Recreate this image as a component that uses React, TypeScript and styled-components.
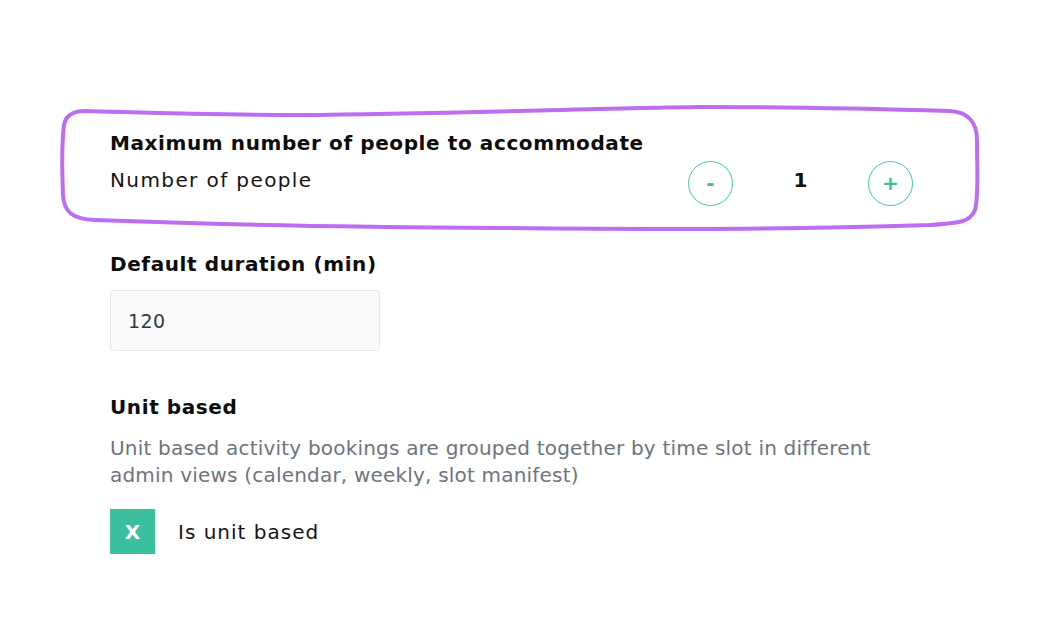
import React, { useState } from "react";
import styled, { createGlobalStyle } from "styled-components";

const GlobalStyle = createGlobalStyle`
  html, body {
    margin: 0;
    padding: 0;
    background: #ffffff;
  }
  body {
    font-family: "DejaVu Sans", "Noto Sans", sans-serif;
    color: #111111;
  }
`;

const Page = styled.div`
  position: relative;
  width: 1039px;
  height: 630px;
  box-sizing: border-box;
  padding: 131px 0 0 110px;
`;

const Section = styled.div<{ $gap: number; $top?: number }>`
  display: flex;
  flex-direction: column;
  gap: ${(p) => p.$gap}px;
  margin-top: ${(p) => p.$top ?? 0}px;
`;

const Title = styled.div`
  font-size: 20px;
  font-weight: 700;
  line-height: 24px;
  letter-spacing: 0.6px;
  color: #0c0c0c;
`;

const CounterRow = styled.div`
  display: flex;
  align-items: center;
  width: 803px;
  height: 44px;
`;

const RowLabel = styled.div`
  flex: 1;
  font-size: 20px;
  line-height: 24px;
  letter-spacing: 1.4px;
  margin-top: -6px;
  color: #141414;
`;

const RoundButton = styled.button`
  width: 45px;
  height: 45px;
  border-radius: 50%;
  border: 1px solid #4cc7a3;
  background: #ffffff;
  color: #3dbf9b;
  font-family: "DejaVu Sans", sans-serif;
  font-size: 20px;
  font-weight: 700;
  display: flex;
  align-items: center;
  justify-content: center;
  padding: 0;
  cursor: pointer;
`;

const Count = styled.div`
  width: 135px;
  text-align: center;
  font-size: 20px;
  font-weight: 700;
  margin-top: -6px;
`;

const DurationInput = styled.input`
  box-sizing: border-box;
  width: 270px;
  height: 61px;
  border: 1px solid #e6e6e6;
  border-radius: 4px;
  background: #fafafa;
  padding: 0 17px;
  font-family: "DejaVu Sans", sans-serif;
  font-size: 19px;
  letter-spacing: 0.4px;
  color: #2f3a48;
  outline: none;
`;

const Description = styled.div`
  font-size: 20px;
  line-height: 27px;
  letter-spacing: 0.2px;
  color: #6d7480;
  width: 790px;
`;

const CheckRow = styled.label`
  display: flex;
  align-items: center;
  gap: 23px;
  margin-top: 20px;
  cursor: pointer;
`;

const CheckBox = styled.span`
  width: 45px;
  height: 45px;
  background: #3cbf9e;
  color: #ffffff;
  font-size: 20px;
  font-weight: 700;
  display: flex;
  align-items: center;
  justify-content: center;
`;

const CheckLabel = styled.span`
  font-size: 20px;
  letter-spacing: 1px;
  color: #141414;
`;

const Annotation = styled.svg`
  position: absolute;
  left: 0;
  top: 0;
  pointer-events: none;
`;

export default function App() {
  const [people, setPeople] = useState(1);
  const [duration, setDuration] = useState("120");

  return (
    <>
      <GlobalStyle />
      <Page>
        <Section $gap={6}>
          <Title>Maximum number of people to accommodate</Title>
          <CounterRow>
            <RowLabel>Number of people</RowLabel>
            <RoundButton onClick={() => setPeople(Math.max(1, people - 1))}>-</RoundButton>
            <Count>{people}</Count>
            <RoundButton onClick={() => setPeople(people + 1)}>+</RoundButton>
          </CounterRow>
        </Section>
        <Section $gap={14} $top={47}>
          <Title>Default duration (min)</Title>
          <DurationInput value={duration} onChange={(e) => setDuration(e.target.value)} />
        </Section>
        <Section $gap={16} $top={44}>
          <Title>Unit based</Title>
          <Description>
            Unit based activity bookings are grouped together by time slot in different admin views
            (calendar, weekly, slot manifest)
          </Description>
        </Section>
        <CheckRow>
          <CheckBox>X</CheckBox>
          <CheckLabel>Is unit based</CheckLabel>
        </CheckRow>
        <Annotation width="1039" height="630" viewBox="0 0 1039 630">
          <path
            d="M 85 111 C 130 112, 200 115, 300 115 C 450 114, 600 108, 700 107 C 800 107, 880 109, 950 111 C 970 112, 977 125, 977 140 C 977 170, 979 195, 975 210 C 970 222, 960 223, 930 225 C 800 229, 700 230, 500 228 C 350 227, 200 224, 95 220 C 72 219, 64 212, 63 195 C 62 170, 62 140, 64 125 C 66 114, 75 111, 85 111 Z"
            fill="none"
            stroke="#bb6ef0"
            strokeWidth="4"
            strokeLinejoin="round"
          />
        </Annotation>
      </Page>
    </>
  );
}
